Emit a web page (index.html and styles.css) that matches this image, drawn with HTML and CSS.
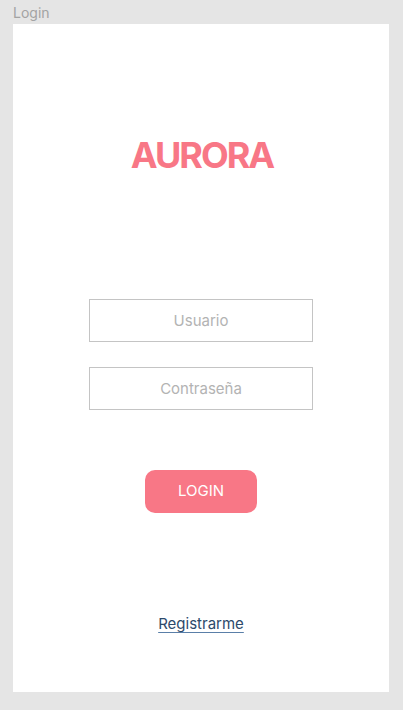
FILE: index.html
```html
<!DOCTYPE html>
<html lang="es">
<head>
<meta charset="utf-8">
<title>Login</title>
<link rel="stylesheet" href="styles.css">
</head>
<body>
<div class="frame-label">Login</div>
<main class="screen">
  <h1 class="brand">AURORA</h1>
  <form class="login-form">
    <input class="field" type="text" placeholder="Usuario">
    <input class="field field-second" type="password" placeholder="Contraseña">
    <button class="btn-login" type="button">LOGIN</button>
  </form>
  <a class="register-link" href="#">Registrarme</a>
</main>
</body>
</html>
```

FILE: styles.css
```css
* { box-sizing: border-box; }
html, body { margin: 0; padding: 0; }
body {
  background: #e5e5e5;
  font-family: Inter, "Noto Sans", sans-serif;
  width: 403px;
  height: 710px;
  overflow: hidden;
}
.frame-label {
  font-size: 14px;
  line-height: 17px;
  color: #a3a3a3;
  padding: 4px 0 0 13px;
  height: 24px;
}
.screen {
  margin-left: 13px;
  width: 376px;
  height: 668px;
  background: #ffffff;
  display: flex;
  flex-direction: column;
  align-items: center;
}
.brand {
  margin: 109px 0 0 0;
  font-size: 36px;
  line-height: 44px;
  font-weight: 700;
  color: #f87786;
  letter-spacing: -2px;
  text-indent: 2px;
}
.login-form {
  margin-top: 122px;
  display: flex;
  flex-direction: column;
  align-items: center;
}
.field {
  width: 224px;
  height: 43px;
  border: 1px solid #c4c4c4;
  border-radius: 0;
  font-family: inherit;
  font-size: 15px;
  text-align: center;
  color: #555;
  outline: none;
  padding: 0 0 1px 0;
  background: #fff;
}
.field::placeholder { color: #b3b3b3; }
.field-second { margin-top: 25px; }
.btn-login {
  margin-top: 60px;
  width: 112px;
  height: 43px;
  border: none;
  border-radius: 10px;
  background: #f87786;
  color: #ffffff;
  font-family: inherit;
  font-size: 15px;
  padding: 0 0 3px 0;
}
.register-link {
  margin-top: 102px;
  font-size: 15px;
  line-height: 18px;
  color: #2d4a6b;
  text-decoration: underline;
  text-decoration-color: #5a7fa8;
  text-underline-offset: 3px;
}
```
